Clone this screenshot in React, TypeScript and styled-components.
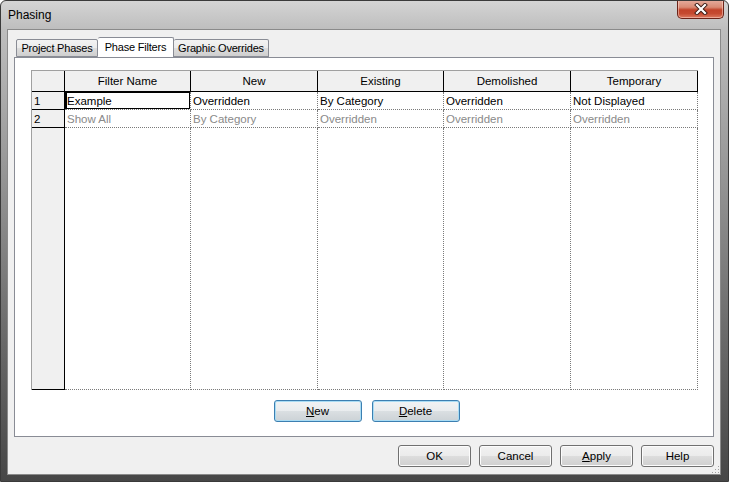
import React from "react";
import styled, { createGlobalStyle } from "styled-components";

const GlobalStyle = createGlobalStyle`
  * { box-sizing: border-box; }
  html, body { margin: 0; padding: 0; background: #ffffff; }
  body {
    font-family: "Liberation Sans", Arial, sans-serif;
    font-size: 11.5px;
    color: #000;
  }
`;

const Window = styled.div`
  width: 729px;
  height: 482px;
  display: flex;
  flex-direction: column;
  border: 1px solid #3a3a3a;
  border-radius: 6px 6px 0 0;
  overflow: hidden;
  background: linear-gradient(
    to bottom,
    #d4d4d4 0px,
    #bebebe 28px,
    #a4a4a4 120px,
    #6e6e6e 320px,
    #464646 482px
  );
`;

const TitleBar = styled.div`
  height: 28px;
  display: flex;
  align-items: flex-start;
  justify-content: space-between;
  padding-left: 7px;
`;

const Title = styled.span`
  margin-top: 7px;
  font-size: 12px;
  color: #000;
`;

const CloseButton = styled.div`
  width: 47px;
  height: 19px;
  margin-right: 4px;
  margin-top: -1px;
  display: flex;
  align-items: center;
  justify-content: center;
  border: 1px solid #6b2318;
  border-top: none;
  border-radius: 0 0 5px 5px;
  background: linear-gradient(
    to bottom,
    #e6ad9f 0%,
    #d98a74 40%,
    #c2432a 55%,
    #c54a30 75%,
    #dc7a60 100%
  );
  box-shadow: inset 0 0 0 1px rgba(255, 220, 210, 0.5);
`;

const Client = styled.div`
  position: relative;
  flex: 1;
  display: flex;
  flex-direction: column;
  margin: 0 7px 6px 6px;
  padding: 7px 6px 7px 6px;
  background: #f0f0f0;
  border: 1px solid #8a8a8a;
`;

const TabStrip = styled.div`
  height: 20px;
  display: flex;
  align-items: flex-end;
  padding-left: 2px;
`;

const Tab = styled.div<{ $active?: boolean; $w: number }>`
  width: ${(p) => p.$w}px;
  height: ${(p) => (p.$active ? 21 : 18)}px;
  margin-bottom: ${(p) => (p.$active ? -1 : 0)}px;
  display: flex;
  justify-content: center;
  padding-top: ${(p) => (p.$active ? 3 : 2)}px;
  font-size: 11px;
  letter-spacing: -0.2px;
  white-space: nowrap;
  border: 1px solid #898c95;
  border-bottom: ${(p) => (p.$active ? "none" : "1px solid #898c95")};
  border-radius: 2px 2px 0 0;
  background: ${(p) =>
    p.$active
      ? "#ffffff"
      : "linear-gradient(to bottom, #f3f3f3 0%, #ebebeb 50%, #dddddd 51%, #cfcfcf 100%)"};
  & + & {
    border-left: ${(p) => (p.$active ? "1px solid #898c95" : "none")};
  }
`;

const Panel = styled.div`
  height: 380px;
  display: flex;
  flex-direction: column;
  align-items: flex-start;
  padding: 12px 15px 14px 16px;
  background: #ffffff;
  border: 1px solid #898c95;
`;

const Grid = styled.div`
  width: 667px;
  height: 320px;
  display: grid;
  grid-template-columns: 33px 126px 127px 126px 127px 127px;
  grid-template-rows: 21px 18px 18px 1fr;
  border-top: 1px solid #a0a0a0;
  border-left: 1px solid #a0a0a0;
`;

const HeadCell = styled.div`
  display: flex;
  align-items: center;
  justify-content: center;
  background: #f0f0f0;
  border-right: 1px solid #000;
  border-bottom: 1px solid #000;
`;

const RowHead = styled.div`
  display: flex;
  align-items: center;
  padding-left: 2px;
  background: #f0f0f0;
  border-right: 1px solid #000;
  border-bottom: 1px solid #000;
`;

const Cell = styled.div<{ $dim?: boolean; $selected?: boolean }>`
  display: flex;
  align-items: center;
  padding-left: 2px;
  white-space: nowrap;
  overflow: hidden;
  color: ${(p) => (p.$dim ? "#8a8a8a" : "#000")};
  background: #ffffff;
  border-right: 1px dotted #7a7a7a;
  border-bottom: 1px dotted #7a7a7a;
  box-shadow: ${(p) => (p.$selected ? "inset 2px 1px 0 0 #000, inset -1px -1px 0 0 #000" : "none")};
`;

const ButtonRow = styled.div`
  align-self: stretch;
  display: flex;
  justify-content: center;
  gap: 10px;
  margin-top: 10px;
  padding-left: 4px;
`;

const Footer = styled.div`
  display: flex;
  justify-content: flex-end;
  gap: 8px;
  margin-top: 8px;
`;

const PushButton = styled.button<{ $w: number; $accent?: boolean }>`
  width: ${(p) => p.$w}px;
  height: 22px;
  padding: 0;
  font: inherit;
  color: #000;
  border: 1px solid ${(p) => (p.$accent ? "#3c7fb1" : "#707070")};
  border-radius: 3px;
  background: ${(p) =>
    p.$accent
      ? "linear-gradient(to bottom, #f1f3f4 0%, #e9ecee 50%, #dadfe2 51%, #ccd2d6 100%)"
      : "linear-gradient(to bottom, #f2f2f2 0%, #ebebeb 50%, #dddddd 51%, #cfcfcf 100%)"};
  box-shadow: inset 0 0 0 1px ${(p) => (p.$accent ? "#a9dcf4" : "#fcfcfc")};
  u {
    text-decoration: underline;
  }
`;

const Grip = styled.svg`
  position: absolute;
  right: 0;
  bottom: 0;
`;

const columns = ["Filter Name", "New", "Existing", "Demolished", "Temporary"];

const rows = [
  { n: "1", dim: false, cells: ["Example", "Overridden", "By Category", "Overridden", "Not Displayed"] },
  { n: "2", dim: true, cells: ["Show All", "By Category", "Overridden", "Overridden", "Overridden"] },
];

export default function App() {
  return (
    <>
      <GlobalStyle />
      <Window>
        <TitleBar>
          <Title>Phasing</Title>
          <CloseButton>
            <svg width="14" height="12" viewBox="0 0 14 12">
              <path d="M3 2 L11 10 M11 2 L3 10" stroke="#3a1a14" strokeWidth="4" strokeLinecap="square" />
              <path d="M3 2 L11 10 M11 2 L3 10" stroke="#ffffff" strokeWidth="2.2" strokeLinecap="square" />
            </svg>
          </CloseButton>
        </TitleBar>
        <Client>
          <TabStrip>
            <Tab $w={82}>Project Phases</Tab>
            <Tab $w={76} $active>
              Phase Filters
            </Tab>
            <Tab $w={95}>Graphic Overrides</Tab>
          </TabStrip>
          <Panel>
            <Grid>
              <HeadCell />
              {columns.map((c) => (
                <HeadCell key={c}>{c}</HeadCell>
              ))}
              {rows.map((r) => (
                <React.Fragment key={r.n}>
                  <RowHead>{r.n}</RowHead>
                  {r.cells.map((c, i) => (
                    <Cell key={i} $dim={r.dim} $selected={r.n === "1" && i === 0}>
                      {c}
                    </Cell>
                  ))}
                </React.Fragment>
              ))}
              <RowHead />
              {columns.map((c) => (
                <Cell key={c} />
              ))}
            </Grid>
            <ButtonRow>
              <PushButton $w={88} $accent>
                <u>N</u>ew
              </PushButton>
              <PushButton $w={88} $accent>
                <u>D</u>elete
              </PushButton>
            </ButtonRow>
          </Panel>
          <Footer>
            <PushButton $w={73}>OK</PushButton>
            <PushButton $w={73}>Cancel</PushButton>
            <PushButton $w={73}>
              <u>A</u>pply
            </PushButton>
            <PushButton $w={73}>Help</PushButton>
          </Footer>
          <Grip width="8" height="8" viewBox="0 0 8 8">
            <rect x="6" y="0" width="1" height="1" fill="#a0a0a0" />
            <rect x="3" y="3" width="1" height="1" fill="#a0a0a0" />
            <rect x="6" y="3" width="1" height="1" fill="#a0a0a0" />
            <rect x="0" y="6" width="1" height="1" fill="#a0a0a0" />
            <rect x="3" y="6" width="1" height="1" fill="#a0a0a0" />
            <rect x="6" y="6" width="1" height="1" fill="#a0a0a0" />
          </Grip>
        </Client>
      </Window>
    </>
  );
}
